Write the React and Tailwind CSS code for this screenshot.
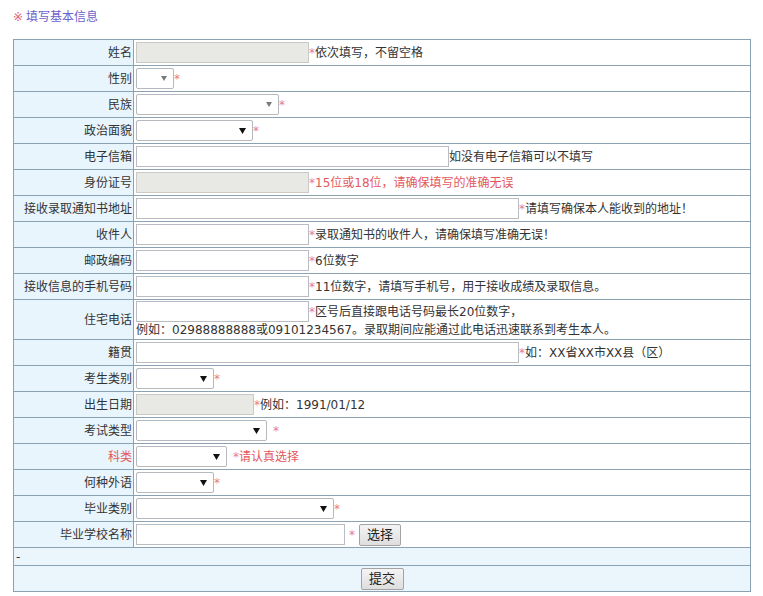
import React from 'react';

const Star = () => <span className="text-[#e77b88]">*</span>;

const TextInput = ({ width, disabled }) => (
  <input
    type="text"
    disabled={disabled}
    style={{ width }}
    className={`h-[21px] shrink-0 border px-1 outline-none ${
      disabled ? 'bg-[#e8e8e5] border-[#c9c9c5]' : 'bg-white border-[#b9bcc2]'
    }`}
  />
);

const Select = ({ width, grey }) => (
  <div
    style={{ width }}
    className="flex h-[21px] shrink-0 items-center justify-end rounded-[2px] border border-[#b5b8bd] bg-white pr-[6px]"
  >
    {grey ? (
      <svg width="6" height="5" viewBox="0 0 6 5">
        <path d="M0 0h6L3 5z" fill="#7a7a7a" />
      </svg>
    ) : (
      <svg width="7" height="6" viewBox="0 0 7 6">
        <path d="M0 0h7L3.5 6z" fill="#111" />
      </svg>
    )}
  </div>
);

const Row = ({ label, red, children, tall }) => (
  <div className={`flex border-b border-[#8aa2b2] ${tall ? 'h-[40px]' : 'h-[26px]'}`}>
    <div
      className={`flex w-[120px] shrink-0 items-center justify-end border-r border-[#8aa2b2] bg-[#e9f5fd] pr-[1px] ${
        red ? 'text-[#e2585e]' : ''
      }`}
    >
      {label}
    </div>
    <div className="flex min-w-0 flex-1 items-center whitespace-nowrap bg-white pl-[2px]">{children}</div>
  </div>
);

const App = () => {
  return (
    <div
      className="min-h-screen bg-white px-[13px] pt-[9px] text-[12px] text-[#333]"
      style={{ fontFamily: '"DejaVu Sans", "Noto Sans CJK SC", sans-serif' }}
    >
      <div className="h-[16px] leading-[16px]">
        <span className="text-[#e0657a]">※</span>
        <span className="ml-[3px] text-[#6b62cc]">填写基本信息</span>
      </div>

      <div className="mt-[14px] w-[738px] border border-[#8aa2b2]">
        <Row label="姓名">
          <TextInput width={173} disabled />
          <Star />依次填写，不留空格
        </Row>
        <Row label="性别">
          <Select width={38} grey />
          <Star />
        </Row>
        <Row label="民族">
          <Select width={143} grey />
          <Star />
        </Row>
        <Row label="政治面貌">
          <Select width={117} />
          <Star />
        </Row>
        <Row label="电子信箱">
          <TextInput width={313} />
          如没有电子信箱可以不填写
        </Row>
        <Row label="身份证号">
          <TextInput width={173} disabled />
          <Star />
          <span className="text-[#e2585e]">15位或18位，请确保填写的准确无误</span>
        </Row>
        <Row label="接收录取通知书地址">
          <TextInput width={383} />
          <Star />请填写确保本人能收到的地址！
        </Row>
        <Row label="收件人">
          <TextInput width={173} />
          <Star />录取通知书的收件人，请确保填写准确无误！
        </Row>
        <Row label="邮政编码">
          <TextInput width={173} />
          <Star />6位数字
        </Row>
        <Row label="接收信息的手机号码">
          <TextInput width={173} />
          <Star />11位数字，请填写手机号，用于接收成绩及录取信息。
        </Row>
        <Row label="住宅电话" tall>
          <div className="flex flex-col pt-px">
            <div className="flex items-center">
              <TextInput width={173} />
              <Star />区号后直接跟电话号码最长20位数字，
            </div>
            <div className="leading-[17px]">例如：02988888888或09101234567。录取期间应能通过此电话迅速联系到考生本人。</div>
          </div>
        </Row>
        <Row label="籍贯">
          <TextInput width={383} />
          <Star />如：XX省XX市XX县（区）
        </Row>
        <Row label="考生类别">
          <Select width={78} />
          <Star />
        </Row>
        <Row label="出生日期">
          <TextInput width={118} disabled />
          <Star />例如：1991/01/12
        </Row>
        <Row label="考试类型">
          <Select width={131} />
          <span className="ml-[6px]">
            <Star />
          </span>
        </Row>
        <Row label="科类" red>
          <Select width={91} />
          <span className="ml-[6px] text-[#e2585e]">
            <Star />请认真选择
          </span>
        </Row>
        <Row label="何种外语">
          <Select width={78} />
          <Star />
        </Row>
        <Row label="毕业类别">
          <Select width={198} />
          <Star />
        </Row>
        <Row label="毕业学校名称">
          <TextInput width={209} />
          <span className="mx-[4px]">
            <Star />
          </span>
          <button className="h-[22px] w-[42px] rounded-[2px] border border-[#a3a3a3] bg-gradient-to-b from-[#f4f4f4] to-[#dedede] text-[13px] text-[#222]">
            选择
          </button>
        </Row>
        <div className="flex h-[18px] items-center border-b border-[#8aa2b2] bg-[#eaf5fc] pl-[2px]">-</div>
        <div className="flex h-[25px] items-center justify-center bg-[#eaf5fc]">
          <button className="h-[22px] w-[43px] rounded-[2px] border border-[#a3a3a3] bg-gradient-to-b from-[#f4f4f4] to-[#dedede] text-[13px] text-[#222]">
            提交
          </button>
        </div>
      </div>
    </div>
  );
};

export default App;
